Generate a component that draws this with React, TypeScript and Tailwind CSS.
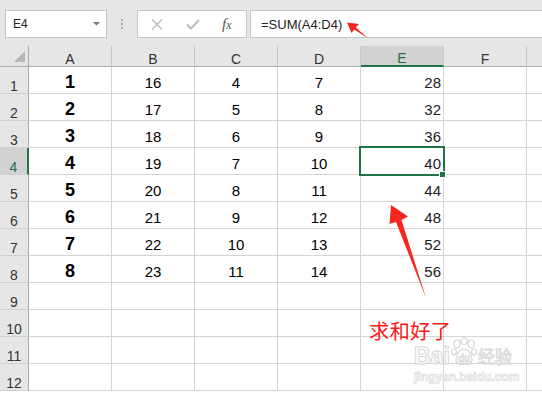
import React from "react";

const rows: [number, number, number, number, number][] = [
  [1, 16, 4, 7, 28],
  [2, 17, 5, 8, 32],
  [3, 18, 6, 9, 36],
  [4, 19, 7, 10, 40],
  [5, 20, 8, 11, 44],
  [6, 21, 9, 12, 48],
  [7, 22, 10, 13, 52],
  [8, 23, 11, 14, 56],
];

const cols = ["A", "B", "C", "D", "E", "F"];

function Cell({ children, className = "" }: { children?: React.ReactNode; className?: string }) {
  return (
    <div className={`w-[83px] h-[27px] shrink-0 border-r border-b border-[#d4d4d4] flex items-end ${className}`}>
      {children}
    </div>
  );
}

export default function App() {
  const allRows = Array.from({ length: 12 }, (_, i) => i + 1);
  return (
    <div
      className="relative w-[542px] h-[397px] overflow-hidden bg-white text-black"
      style={{ fontFamily: '"Liberation Sans", Arial, "Noto Sans CJK SC", sans-serif' }}
    >
      {/* toolbar */}
      <div className="h-[46px] bg-[#e6e6e6] flex items-start pt-[10px] pl-[5px]">
        <div className="w-[102px] h-[28px] shrink-0 bg-white border border-[#c6c6c6] flex items-center justify-between pl-[7px] pr-[5px]">
          <span className="text-[12px] leading-none text-[#222]">E4</span>
          <svg width="8" height="4" viewBox="0 0 8 4"><path d="M0 0H7L3.5 3.5Z" fill="#777" /></svg>
        </div>
        <div className="w-[30px] h-[28px] shrink-0 flex flex-col items-center justify-center gap-[2px]">
          <div className="w-[2px] h-[2px] bg-[#a8a8a8]" />
          <div className="w-[2px] h-[2px] bg-[#a8a8a8]" />
          <div className="w-[2px] h-[2px] bg-[#a8a8a8]" />
        </div>
        <div className="w-[110px] h-[28px] shrink-0 bg-white border border-[#c6c6c6] flex items-center pl-[13px]">
          <svg width="12" height="11" viewBox="0 0 12 11">
            <path d="M1 0.5L11 10.5M11 0.5L1 10.5" stroke="#bdbdbd" strokeWidth="1.4" fill="none" />
          </svg>
          <svg width="14" height="11" viewBox="0 0 14 11" className="ml-[23px]">
            <path d="M1 5.5L5 9.5L13 1" stroke="#bdbdbd" strokeWidth="2" fill="none" />
          </svg>
          <span
            className="ml-[22px] text-[15px] leading-none italic text-[#555]"
            style={{ fontFamily: '"Liberation Serif", "Times New Roman", serif' }}
          >
            f<span className="text-[12px]">x</span>
          </span>
        </div>
        <div className="ml-[3px] w-[310px] h-[28px] shrink-0 bg-white border border-[#c6c6c6] flex items-center pl-[10px]">
          <span className="text-[13px] leading-none text-[#222]">=SUM(A4:D4)</span>
        </div>
      </div>

      {/* column headers */}
      <div className="flex h-[21px]">
        <div className="w-[29px] h-[21px] shrink-0 bg-[#e6e6e6] border-r border-b border-[#ababab] relative">
          <svg width="12" height="12" viewBox="0 0 12 12" className="absolute left-[14px] top-[5px]">
            <path d="M11 0V11H0Z" fill="#b8b8b8" />
          </svg>
        </div>
        {cols.map((c) => {
          const sel = c === "E";
          return (
            <div
              key={c}
              className={`w-[83px] h-[21px] shrink-0 border-r border-[#c6c6c6] flex items-end justify-center text-[14px] leading-none ${
                sel ? "bg-[#d2d2d2] border-b-2 border-b-[#217346] text-[#217346]" : "bg-[#e6e6e6] border-b border-b-[#ababab] text-[#333]"
              }`}
            >
              <span>{c}</span>
            </div>
          );
        })}
        <div className="w-[20px] h-[21px] shrink-0 bg-[#e6e6e6] border-b border-[#ababab]" />
      </div>

      {/* rows */}
      {allRows.map((r) => {
        const d = rows[r - 1];
        const sel = r === 4;
        return (
          <div key={r} className="flex h-[27px]">
            <div
              className={`w-[29px] h-[27px] shrink-0 border-b border-[#d0d0d0] flex items-end justify-center text-[14px] leading-none ${
                sel ? "bg-[#d2d2d2] border-r-2 border-r-[#217346] text-[#217346]" : "bg-[#e6e6e6] border-r border-r-[#ababab] text-[#333]"
              }`}
            >
              {r}
            </div>
            <Cell className="justify-center pb-[2px]">
              {d && <span className="text-[18px] leading-none font-bold">{d[0]}</span>}
            </Cell>
            <Cell className="justify-center pb-[3px]">
              {d && <span className="text-[15px] leading-none">{d[1]}</span>}
            </Cell>
            <Cell className="justify-center pb-[3px]">
              {d && <span className="text-[15px] leading-none">{d[2]}</span>}
            </Cell>
            <Cell className="justify-center pb-[3px]">
              {d && <span className="text-[15px] leading-none">{d[3]}</span>}
            </Cell>
            <Cell className="justify-end pb-[3px] pr-[2px]">
              {d && <span className="text-[15px] leading-none text-[#222]">{d[4]}</span>}
            </Cell>
            <Cell />
            <Cell />
          </div>
        );
      })}

      {/* selection box */}
      <div className="absolute left-[359px] top-[146px] w-[86px] h-[30px] border-2 border-[#217346] pointer-events-none" />
      <div className="absolute left-[439px] top-[171px] w-[7px] h-[7px] bg-white pointer-events-none" />
      <div className="absolute left-[440px] top-[172px] w-[5px] h-[5px] bg-[#217346] pointer-events-none" />

      {/* arrows */}
      <svg className="absolute left-0 top-0 pointer-events-none" width="542" height="397" viewBox="0 0 542 397">
        <polygon points="347,22.5 359,24 355.8,27.6 368.5,38.5 354.2,29.4 351.5,33" fill="#f5261e" />
        <polygon points="391,205 408,216.5 401.5,220 426,298 396,222 389.5,224" fill="#f5261e" />
      </svg>

      {/* annotation */}
      <div
        className="absolute left-[369px] top-[320px] text-[20.5px] leading-none text-[#ff1a1a]"
        style={{ fontFamily: '"Noto Sans CJK SC", sans-serif' }}
      >
        求和好了
      </div>

      {/* watermark */}
      <div className="absolute left-[414px] top-[336px] pointer-events-none flex flex-col items-start">
        <div className="flex items-end h-[32px]">
          <span className="text-[23px] leading-none font-bold text-white" style={{ WebkitTextStroke: "1px #d6d6d6" }}>Bai</span>
          <svg width="26" height="30" viewBox="0 0 26 30" className="mx-[1px] mb-[1px]">
            <g fill="none" stroke="#d6d6d6" strokeWidth="1.2">
              <ellipse cx="6" cy="7" rx="3" ry="4" />
              <ellipse cx="13" cy="4" rx="3" ry="3.5" />
              <ellipse cx="20" cy="7" rx="3" ry="4" />
              <ellipse cx="3" cy="15" rx="2.5" ry="3" />
              <ellipse cx="23" cy="15" rx="2.5" ry="3" />
              <path d="M13 12C8 12 5 19 5 23C5 27 9 28 13 27C17 28 21 27 21 23C21 19 18 12 13 12Z" />
            </g>
            <text x="13" y="25" textAnchor="middle" fontSize="10" fontWeight="bold" fill="white" stroke="#d6d6d6" strokeWidth="0.8" fontFamily="Liberation Sans, sans-serif">du</text>
          </svg>
          <span
            className="text-[17px] leading-none text-white mb-[4px]"
            style={{ WebkitTextStroke: "0.8px #d6d6d6", fontFamily: '"Noto Sans CJK SC", sans-serif' }}
          >
            经验
          </span>
        </div>
        <span className="mt-[3px] text-[12px] leading-none font-bold text-white" style={{ WebkitTextStroke: "0.7px #d9d9d9" }}>
          jingyan.baidu.com
        </span>
      </div>
    </div>
  );
}
